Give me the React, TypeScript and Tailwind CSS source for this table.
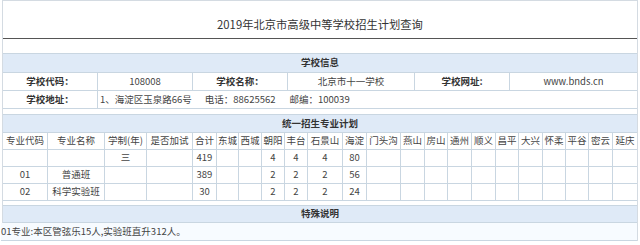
import React from "react";

const B = "border-[#c9d6e1]";

const cols2 = [
  "专业代码","专业名称","学制(年)","是否加试","合计","东城","西城","朝阳","丰台","石景山","海淀","门头沟","燕山","房山","通州","顺义","昌平","大兴","怀柔","平谷","密云","延庆",
];

const rows2: string[][] = [
  ["", "", "三", "", "419", "", "", "4", "4", "4", "80"],
  ["01", "普通班", "", "", "389", "", "", "2", "2", "2", "56"],
  ["02", "科学实验班", "", "", "30", "", "", "2", "2", "2", "24"],
];

function Row2({ cells, h }: { cells: string[]; h: string }) {
  return (
    <>
      {cols2.map((_, i) => (
        <div
          key={i}
          className={`${h} flex items-center justify-center whitespace-nowrap border-b ${B} ${i < cols2.length - 1 ? "border-r" : ""} bg-white`}
        >
          {cells[i] ?? ""}
        </div>
      ))}
    </>
  );
}

export default function App() {
  return (
    <div className="w-[640px] h-[245px] bg-white font-['Noto_Sans_CJK_SC',sans-serif] text-[#444] text-[9.5px] leading-none overflow-hidden">
      <div className="ml-[2px] w-[636px] h-[241px] border-x border-t border-[#d4dbe2]">
        <div className="h-[38px] border-b border-[#555] text-center text-[11.3px] leading-[16px] pt-[15px] text-[#333]">
          2019年北京市高级中等学校招生计划查询
        </div>

        {/* 学校信息 */}
        <div className="mt-[14px]">
          <div className={`h-[20px] bg-[#dfeaf7] border-t border-b ${B} flex items-center justify-center font-bold text-[#333]`}>
            学校信息
          </div>
          <div className="grid grid-cols-[95px_95px_95px_127px_95px_127px]">
            <div className={`h-[18px] flex items-center justify-center border-r border-b ${B} font-bold text-[#333]`}>学校代码：</div>
            <div className={`h-[18px] flex items-center justify-center border-r border-b ${B}`}>108008</div>
            <div className={`h-[18px] flex items-center justify-center border-r border-b ${B} font-bold text-[#333]`}>学校名称：</div>
            <div className={`h-[18px] flex items-center justify-center border-r border-b ${B}`}>北京市十一学校</div>
            <div className={`h-[18px] flex items-center justify-center border-r border-b ${B} font-bold text-[#333]`}>学校网址:</div>
            <div className={`h-[18px] flex items-center justify-center border-b ${B}`}>www.bnds.cn</div>
            <div className={`h-[18px] flex items-center justify-center border-r border-b ${B} font-bold text-[#333]`}>学校地址：</div>
            <div className={`col-span-5 h-[18px] flex items-center pl-[2px] border-b ${B} whitespace-nowrap`}>
              <span>1、海淀区玉泉路66号</span>
              <span className="ml-[13px]">电话：88625562</span>
              <span className="ml-[14px]">邮编：100039</span>
            </div>
          </div>
        </div>

        {/* 统一招生专业计划 */}
        <div className="mt-[5px]">
          <div className={`h-[19px] bg-[#dfeaf7] border-t border-b ${B} flex items-center justify-center font-bold text-[#333]`}>
            统一招生专业计划
          </div>
          <div className="grid grid-cols-[45px_57px_42px_46px_24px_22px_23px_23px_23px_35px_24px_34px_24px_23px_24px_24px_23px_24px_23px_23px_24px_24px]">
            <Row2 cells={cols2} h="h-[17px]" />
            {rows2.map((r, i) => (
              <Row2 key={i} cells={r} h="h-[17px]" />
            ))}
          </div>
        </div>

        {/* 特殊说明 */}
        <div className="mt-[4px]">
          <div className={`h-[18px] bg-[#dfeaf7] border-t border-b ${B} flex items-center justify-center font-bold text-[#333]`}>
            特殊说明
          </div>
          <div className={`h-[18px] bg-[#f7fbff] border-b ${B} flex items-center whitespace-nowrap -ml-[2px]`}>
            01专业:本区管弦乐15人,实验班直升312人。
          </div>
        </div>
      </div>
    </div>
  );
}
